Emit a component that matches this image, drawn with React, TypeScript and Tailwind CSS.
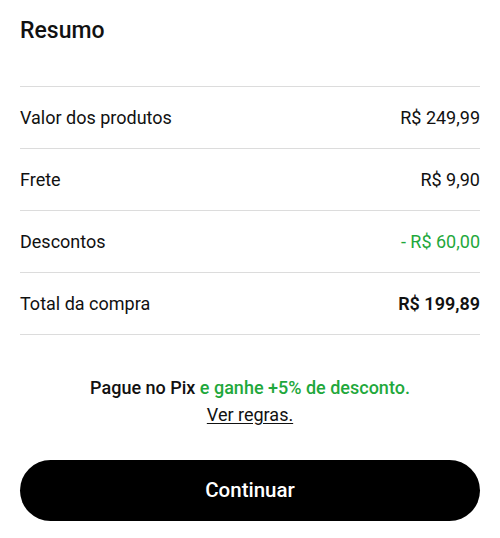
const ROWS = [
  { label: "Valor dos produtos", value: "R$ 249,99", tone: "normal" },
  { label: "Frete", value: "R$ 9,90", tone: "normal" },
  { label: "Descontos", value: "- R$ 60,00", tone: "green" },
  { label: "Total da compra", value: "R$ 199,89", tone: "bold" },
];

export default function App() {
  return (
    <div
      className="w-[500px] bg-white px-5 pt-[17px] text-[#111]"
      style={{ fontFamily: "Roboto, 'Liberation Sans', sans-serif" }}
    >
      <h2 className="text-[23px] font-medium leading-[28px]">Resumo</h2>

      <div className="mt-[41px] border-t border-[#dcdcdc]">
        {ROWS.map((r) => (
          <div
            key={r.label}
            className="flex h-[62px] items-center justify-between border-b border-[#dcdcdc] text-[18px]"
          >
            <span>{r.label}</span>
            <span
              className={
                r.tone === "green"
                  ? "text-[#1fa83c]"
                  : r.tone === "bold"
                    ? "font-semibold"
                    : ""
              }
            >
              {r.value}
            </span>
          </div>
        ))}
      </div>

      <div className="mt-[39px] text-center text-[18px] leading-[27px]">
        <p className="font-medium">
          Pague no Pix <span className="text-[#1fa83c]">e ganhe +5% de desconto.</span>
        </p>
        <a href="#" className="underline underline-offset-2">
          Ver regras.
        </a>
      </div>

      <button
        type="button"
        className="mt-[32px] flex h-[61px] w-full items-center justify-center rounded-full bg-black text-[20.5px] font-medium text-white"
      >
        Continuar
      </button>
    </div>
  );
}
